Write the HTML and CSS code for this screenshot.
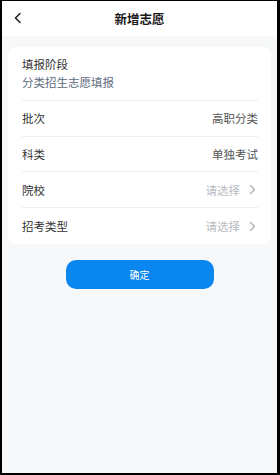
FILE: index.html
```html
<!DOCTYPE html>
<html lang="zh">
<head>
<meta charset="utf-8">
<link rel="stylesheet" href="styles.css">
</head>
<body>
<div class="frame">
  <div class="header">
    <svg class="back" width="10" height="12" viewBox="0 0 10 12"><path d="M7 1.5 L2.5 6 L7 10.5" fill="none" stroke="#222" stroke-width="1.6" stroke-linecap="round" stroke-linejoin="round"/></svg>
    <div class="title">新增志愿</div>
  </div>
  <div class="content">
    <div class="card">
      <div class="row stage">
        <div class="label">填报阶段</div>
        <div class="stage-value">分类招生志愿填报</div>
      </div>
      <div class="row">
        <div class="label">批次</div>
        <div class="value">高职分类</div>
      </div>
      <div class="row">
        <div class="label">科类</div>
        <div class="value">单独考试</div>
      </div>
      <div class="row">
        <div class="label">院校</div>
        <div class="value placeholder">请选择<svg class="chev" width="7" height="11" viewBox="0 0 7 11"><path d="M1.5 1.5 L5.5 5.5 L1.5 9.5" fill="none" stroke="#a8abb0" stroke-width="1.2" stroke-linecap="round" stroke-linejoin="round"/></svg></div>
      </div>
      <div class="row last">
        <div class="label">招考类型</div>
        <div class="value placeholder">请选择<svg class="chev" width="7" height="11" viewBox="0 0 7 11"><path d="M1.5 1.5 L5.5 5.5 L1.5 9.5" fill="none" stroke="#a8abb0" stroke-width="1.2" stroke-linecap="round" stroke-linejoin="round"/></svg></div>
      </div>
    </div>
    <div class="actions">
      <button class="confirm">确定</button>
    </div>
  </div>
</div>
</body>
</html>
```

FILE: styles.css
```css
html, body {
  margin: 0;
  padding: 0;
  background: #000;
  height: 100%;
}
body {
  font-family: "Noto Sans CJK SC", "Noto Sans", sans-serif;
}
.frame {
  box-sizing: border-box;
  margin: 1px 3px 2px 2px;
  height: 472px;
  background: #f6f8fa;
  display: flex;
  flex-direction: column;
}
.header {
  height: 35px;
  background: #fff;
  display: flex;
  align-items: center;
  justify-content: center;
  position: relative;
}
.back {
  position: absolute;
  left: 11px;
  top: 11px;
}
.title {
  font-size: 12.5px;
  font-weight: 700;
  color: #1a1a1a;
}
.content {
  padding: 11px 6px 0 6px;
}
.card {
  background: #fff;
  border-radius: 8px;
  padding: 0 13px 0 14px;
}
.row {
  height: 35.7px;
  display: flex;
  align-items: center;
  justify-content: space-between;
  border-bottom: 1px solid #eeeff1;
  box-sizing: border-box;
}
.row.last {
  border-bottom: none;
  height: 36px;
}
.row.stage {
  height: 54px;
  flex-direction: column;
  align-items: flex-start;
  justify-content: flex-start;
  padding-top: 8px;
}
.label {
  font-size: 11.5px;
  color: #333;
  line-height: 18px;
}
.stage-value {
  font-size: 11.5px;
  color: #5d6b80;
  line-height: 18px;
}
.value {
  font-size: 11.5px;
  color: #555;
  display: flex;
  align-items: center;
}
.value.placeholder {
  color: #b9bcc1;
}
.chev {
  margin-left: 9px;
  margin-right: 2px;
}
.actions {
  display: flex;
  justify-content: center;
  padding-top: 16px;
}
.confirm {
  width: 148px;
  height: 29px;
  border: none;
  border-radius: 10px;
  background: #0a87ee;
  color: #fff;
  font-family: "Noto Sans CJK SC", sans-serif;
  font-size: 10px;
  padding: 0;
}
```
